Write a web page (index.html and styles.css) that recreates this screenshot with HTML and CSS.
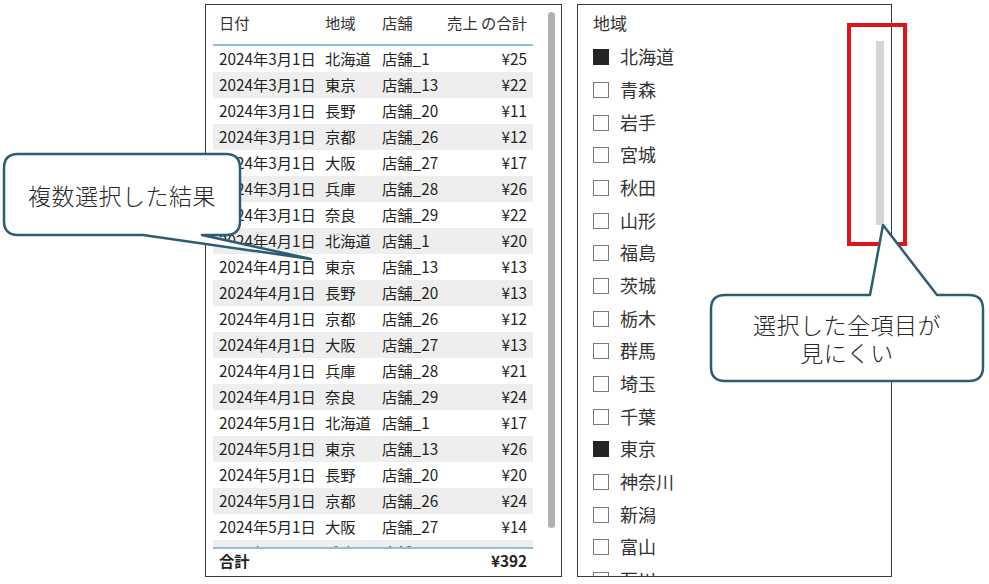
FILE: index.html
```html
<!DOCTYPE html>
<html lang="ja">
<head>
  <meta charset="UTF-8">
  <title>スライサー 複数選択</title>
  <link rel="stylesheet" href="styles.css">
</head>
<body>

<div class="stage">

  <!-- Table visual -->
  <div class="table-card">
    <div class="grid">
      <div class="thead">
        <span>日付</span><span>地域</span><span>店舗</span><span class="num">売上 の合計</span>
      </div>
      <div class="tbody">
        <div class="row"><span>2024年3月1日</span><span>北海道</span><span>店舗_1</span><span class="num">¥25</span></div>
        <div class="row"><span>2024年3月1日</span><span>東京</span><span>店舗_13</span><span class="num">¥22</span></div>
        <div class="row"><span>2024年3月1日</span><span>長野</span><span>店舗_20</span><span class="num">¥11</span></div>
        <div class="row"><span>2024年3月1日</span><span>京都</span><span>店舗_26</span><span class="num">¥12</span></div>
        <div class="row"><span>2024年3月1日</span><span>大阪</span><span>店舗_27</span><span class="num">¥17</span></div>
        <div class="row"><span>2024年3月1日</span><span>兵庫</span><span>店舗_28</span><span class="num">¥26</span></div>
        <div class="row"><span>2024年3月1日</span><span>奈良</span><span>店舗_29</span><span class="num">¥22</span></div>
        <div class="row"><span>2024年4月1日</span><span>北海道</span><span>店舗_1</span><span class="num">¥20</span></div>
        <div class="row"><span>2024年4月1日</span><span>東京</span><span>店舗_13</span><span class="num">¥13</span></div>
        <div class="row"><span>2024年4月1日</span><span>長野</span><span>店舗_20</span><span class="num">¥13</span></div>
        <div class="row"><span>2024年4月1日</span><span>京都</span><span>店舗_26</span><span class="num">¥12</span></div>
        <div class="row"><span>2024年4月1日</span><span>大阪</span><span>店舗_27</span><span class="num">¥13</span></div>
        <div class="row"><span>2024年4月1日</span><span>兵庫</span><span>店舗_28</span><span class="num">¥21</span></div>
        <div class="row"><span>2024年4月1日</span><span>奈良</span><span>店舗_29</span><span class="num">¥24</span></div>
        <div class="row"><span>2024年5月1日</span><span>北海道</span><span>店舗_1</span><span class="num">¥17</span></div>
        <div class="row"><span>2024年5月1日</span><span>東京</span><span>店舗_13</span><span class="num">¥26</span></div>
        <div class="row"><span>2024年5月1日</span><span>長野</span><span>店舗_20</span><span class="num">¥20</span></div>
        <div class="row"><span>2024年5月1日</span><span>京都</span><span>店舗_26</span><span class="num">¥24</span></div>
        <div class="row"><span>2024年5月1日</span><span>大阪</span><span>店舗_27</span><span class="num">¥14</span></div>
        <div class="row"><span>2024年5月1日</span><span>兵庫</span><span>店舗_28</span><span class="num">¥13</span></div>
      </div>
      <div class="tfoot">
        <span>合計</span><span></span><span></span><span class="num">¥392</span>
      </div>
    </div>
    <div class="tscroll"></div>
  </div>

  <!-- Slicer visual -->
  <div class="slicer-card">
    <div class="slicer-body">
      <div class="slicer-title">地域</div>
      <div class="item"><span class="box on"></span>北海道</div>
      <div class="item"><span class="box"></span>青森</div>
      <div class="item"><span class="box"></span>岩手</div>
      <div class="item"><span class="box"></span>宮城</div>
      <div class="item"><span class="box"></span>秋田</div>
      <div class="item"><span class="box"></span>山形</div>
      <div class="item"><span class="box"></span>福島</div>
      <div class="item"><span class="box"></span>茨城</div>
      <div class="item"><span class="box"></span>栃木</div>
      <div class="item"><span class="box"></span>群馬</div>
      <div class="item"><span class="box"></span>埼玉</div>
      <div class="item"><span class="box"></span>千葉</div>
      <div class="item"><span class="box on"></span>東京</div>
      <div class="item"><span class="box"></span>神奈川</div>
      <div class="item"><span class="box"></span>新潟</div>
      <div class="item"><span class="box"></span>富山</div>
      <div class="item"><span class="box"></span>石川</div>
    </div>
    <div class="sscroll"></div>
  </div>

  <!-- Annotations -->
  <div class="highlight"></div>

  <div class="callout callout-left">
    <svg class="bubble" width="236" height="81" viewBox="0 0 236 81">
      <path d="M14,0 H222 Q236,0 236,14 V67 Q236,81 222,81 H198 L307,105 L139,81 H14 Q0,81 0,67 V14 Q0,0 14,0 Z"/>
    </svg>
    <span class="callout-text">複数選択した結果</span>
  </div>

  <div class="callout callout-right">
    <svg class="bubble" width="272" height="86" viewBox="0 0 272 86">
      <path d="M14,0 H159 L172,-70 L226,0 H258 Q272,0 272,14 V72 Q272,86 258,86 H14 Q0,86 0,72 V14 Q0,0 14,0 Z"/>
    </svg>
    <span class="callout-text">選択した全項目が<br>見にくい</span>
  </div>

</div>

</body>
</html>
```

FILE: styles.css
```css
body {
  margin: 0;
  background: #fff;
  font-family: "Noto Sans", "Noto Sans CJK JP", sans-serif;
  color: #252423;
}

.stage {
  position: relative;
  width: 989px;
  height: 584px;
  display: flex;
  align-items: flex-start;
  gap: 15px;
  padding: 4px 0 0 205px;
  box-sizing: border-box;
}

/* Table */
.table-card {
  width: 357px;
  height: 573px;
  box-sizing: border-box;
  border: 1px solid #3c3c3c;
  display: flex;
  padding-left: 7px;
  overflow: hidden;
}

.grid {
  width: 320px;
  display: flex;
  flex-direction: column;
  font-family: "Noto Sans CJK JP", sans-serif;
}

.thead, .row, .tfoot {
  display: grid;
  grid-template-columns: 106px 57px 64px 93px;
  font-size: 15.3px;
}

.thead span, .row span, .tfoot span {
  padding: 0 6px;
  white-space: nowrap;
}

.thead {
  height: 41px;
  box-sizing: border-box;
  padding-top: 7px;
  line-height: 20px;
  border-bottom: 2px solid #8fbfdc;
  color: #333;
}

.tbody {
  height: 501px;
  overflow: hidden;
}

.row {
  height: 26px;
  line-height: 25px;
}

.row:nth-child(even) {
  background: #eeeeee;
}

.num {
  text-align: right;
}

.tfoot {
  height: 29px;
  box-sizing: border-box;
  border-top: 2px solid #8fbfdc;
  line-height: 22px;
  font-weight: bold;
}

.tscroll {
  flex: none;
  width: 7px;
  height: 516px;
  margin: 7px 0 0 15px;
  background: #b3b1ad;
  border-radius: 4px;
}

/* Slicer */
.slicer-card {
  width: 315px;
  height: 573px;
  box-sizing: border-box;
  border: 1px solid #3c3c3c;
  display: flex;
  padding-left: 15px;
  overflow: hidden;
}

.slicer-body {
  flex: 1;
  overflow: hidden;
}

.slicer-title {
  height: 36px;
  box-sizing: border-box;
  padding-top: 8px;
  font-size: 17px;
  line-height: 22px;
  color: #333;
}

.item {
  height: 32.67px;
  display: flex;
  align-items: center;
  gap: 11px;
  font-size: 18px;
  line-height: 22px;
  color: #333;
}

.box {
  flex: none;
  width: 16px;
  height: 16px;
  box-sizing: border-box;
  border: 1px solid #7a7a7a;
  background: #fff;
}

.box.on {
  background: #252423;
  border-color: #252423;
}

.sscroll {
  flex: none;
  width: 8px;
  height: 184px;
  margin: 36px 7px 0 0;
  background: #d5d5d5;
}

/* Annotations */
.highlight {
  position: absolute;
  left: 847px;
  top: 23px;
  width: 60px;
  height: 223px;
  box-sizing: border-box;
  border: 4px solid #e0141b;
}

.callout {
  position: absolute;
  display: flex;
  align-items: center;
  justify-content: center;
}

.callout-left {
  left: 4px;
  top: 154px;
  width: 236px;
  height: 81px;
}

.callout-right {
  left: 711px;
  top: 295px;
  width: 272px;
  height: 86px;
}

.bubble {
  position: absolute;
  left: 0;
  top: 0;
  overflow: visible;
}

.bubble path {
  fill: #fff;
  stroke: #2d5d74;
  stroke-width: 2.5;
  stroke-linejoin: round;
}

.callout-text {
  position: relative;
  font-family: "Noto Sans CJK JP", sans-serif;
  font-size: 23px;
  font-weight: 300;
  line-height: 28px;
  text-align: center;
  color: #2a2a2a;
  letter-spacing: 0.5px;
}
```
